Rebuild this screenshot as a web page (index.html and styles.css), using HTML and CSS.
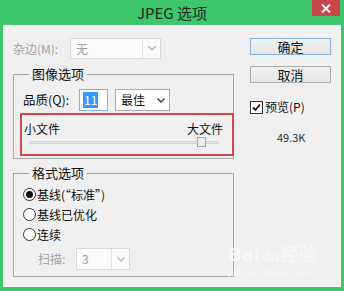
FILE: index.html
```html
<!DOCTYPE html>
<html lang="zh-CN">
<head>
  <meta charset="UTF-8" />
  <title>JPEG 选项</title>
  <link rel="stylesheet" href="styles.css">
</head>
<body>
  <div class="window">
    <!-- Title bar -->
    <div class="titlebar">
      <span></span>
      <span class="title">JPEG 选项</span>
      <span class="close">
        <svg width="10" height="9" viewBox="0 0 10 9"><path d="M1 0.5 L9 8.5 M9 0.5 L1 8.5" stroke="#fff" stroke-width="1.8"/></svg>
      </span>
    </div>

    <div class="client">
      <div class="main">
        <!-- Matte row -->
        <div class="row matte-row">
          <span class="label disabled matte-label">杂边(M):</span>
          <div class="select disabled matte-select">
            <span class="val">无</span>
            <span class="arrow"><svg width="8" height="5" viewBox="0 0 8 5"><path d="M0.5 0.5 L4 4 L7.5 0.5" fill="none" stroke="#b5b5b5" stroke-width="1.4"/></svg></span>
          </div>
        </div>

        <!-- Image options -->
        <div class="group image-group">
          <div class="group-title">图像选项</div>
          <div class="row quality-row">
            <span class="label quality-label">品质(Q):</span>
            <div class="input"><span class="sel">11</span></div>
            <div class="select quality-select">
              <span class="val">最佳</span>
              <span class="arrow plain"><svg width="8" height="5" viewBox="0 0 8 5"><path d="M0.5 0.5 L4 4 L7.5 0.5" fill="none" stroke="#444" stroke-width="1.5"/></svg></span>
            </div>
          </div>
          <div class="highlight">
            <div class="size-labels"><span>小文件</span><span>大文件</span></div>
            <div class="slider">
              <div class="track"></div>
              <div class="thumb"></div>
            </div>
          </div>
        </div>

        <!-- Format options -->
        <div class="group format-group">
          <div class="group-title">格式选项</div>
          <div class="radio-row first"><span class="radio on"></span><span>基线(“标准”)</span></div>
          <div class="radio-row"><span class="radio"></span><span>基线已优化</span></div>
          <div class="radio-row"><span class="radio"></span><span>连续</span></div>
          <div class="row scan-row">
            <span class="label disabled scan-label">扫描:</span>
            <div class="select disabled scan-select">
              <span class="val">3</span>
              <span class="arrow"><svg width="8" height="5" viewBox="0 0 8 5"><path d="M0.5 0.5 L4 4 L7.5 0.5" fill="none" stroke="#b5b5b5" stroke-width="1.4"/></svg></span>
            </div>
          </div>
        </div>
      </div>

      <!-- Buttons and preview -->
      <div class="side">
        <div class="button default">确定</div>
        <div class="button cancel">取消</div>
        <div class="check-row">
          <span class="checkbox"><svg width="11" height="11" viewBox="0 0 11 11"><path d="M2 5.5 L4.5 8 L9 2.5" fill="none" stroke="#111" stroke-width="1.8"/></svg></span>
          <span>预览(P)</span>
        </div>
        <div class="filesize">49.3K</div>
      </div>

      <div class="watermark">Bai<span class="paw">du</span>经验<div class="wm-url">jingyan.baidu.com</div></div>
    </div>
  </div>
</body>
</html>
```

FILE: styles.css
```css
/* Page */
body {
  margin: 0;
  font-family: "Noto Sans CJK SC", "Noto Sans", sans-serif;
  font-size: 12px;
  color: #111;
}

.window {
  width: 344px;
  height: 291px;
  background: #3ec66a;
  display: flex;
  flex-direction: column;
}

/* Title bar */
.titlebar {
  height: 25px;
  display: grid;
  grid-template-columns: 1fr auto 1fr;
  align-items: start;
}

.title {
  font-size: 15px;
  line-height: 25px;
  color: #1d2a22;
}

.close {
  justify-self: end;
  width: 28px;
  height: 16px;
  margin-right: 4px;
  background: #c9474b;
  display: flex;
  align-items: center;
  justify-content: center;
}

/* Client area */
.client {
  position: relative;
  margin: 0 3px;
  height: 262px;
  background: #f0f0f0;
  box-shadow: inset 0 0 0 1px #f7f7f7;
  display: flex;
  padding: 13px 0 0 10px;
  box-sizing: border-box;
}

.main {
  width: 221px;
}

.row {
  display: flex;
  align-items: center;
}

.label {
  line-height: 16px;
}

.disabled {
  color: #a2a2a2;
}

/* Select boxes */
.select {
  display: flex;
  box-sizing: border-box;
  border: 1px solid #acacac;
  background: #fff;
}

.select .val {
  flex: 1;
  padding-left: 5px;
  line-height: 19px;
}

.select .arrow {
  width: 17px;
  border-left: 1px solid #e3e3e3;
  display: flex;
  align-items: center;
  justify-content: center;
}

.select .arrow.plain {
  border-left: none;
}

.select.disabled {
  border-color: #dadada;
  background: #fbfbfb;
}

.matte-row {
  height: 21px;
}

.matte-label {
  width: 57px;
}

.matte-select {
  width: 91px;
  height: 21px;
}

/* Groups */
.group {
  box-sizing: border-box;
  border: 1px solid #a6a6a6;
  padding-left: 9px;
}

.group-title {
  width: fit-content;
  margin: -9px 0 0 6px;
  padding: 0 3px;
  font-size: 13px;
  line-height: 16px;
  background: #f0f0f0;
}

.image-group {
  margin-top: 15px;
  height: 85px;
}

.quality-row {
  margin-top: 7px;
  height: 22px;
}

.quality-label {
  width: 56px;
  font-size: 12.5px;
}

.input {
  width: 29px;
  height: 22px;
  box-sizing: border-box;
  border: 1px solid #7eb4ea;
  background: #fff;
  padding: 2px 0 0 3px;
}

.input .sel {
  display: block;
  width: fit-content;
  background: #3399ff;
  color: #fff;
  line-height: 16px;
  padding: 0 1px;
}

.quality-select {
  margin-left: 7px;
  width: 55px;
  height: 22px;
}

.quality-select .val {
  line-height: 20px;
}

/* Red highlight around slider */
.highlight {
  margin: 2px 0 0 -3px;
  width: 214px;
  height: 43px;
  box-sizing: border-box;
  border: 2px solid #d6474b;
  padding: 6px 9px 0 2px;
}

.size-labels {
  display: flex;
  justify-content: space-between;
  line-height: 16px;
}

.slider {
  position: relative;
  margin-left: 5px;
  width: 190px;
  height: 11px;
}

.track {
  position: relative;
  top: 4px;
  height: 3px;
  box-sizing: border-box;
  border: 1px solid #d6d6d6;
  background: #e7e7e7;
}

.thumb {
  position: absolute;
  left: 168px;
  top: 0;
  width: 9px;
  height: 10px;
  box-sizing: border-box;
  border: 1px solid #a9a9a9;
  background: #ececec;
}

.format-group {
  margin-top: 14px;
  height: 104px;
}

.radio-row {
  display: flex;
  align-items: center;
  height: 20px;
  gap: 1px;
}

.radio-row.first {
  margin-top: 3px;
}

.radio {
  width: 13px;
  height: 13px;
  box-sizing: border-box;
  border: 1px solid #333;
  border-radius: 50%;
  background: #fff;
  display: flex;
  align-items: center;
  justify-content: center;
}

.radio.on::after {
  content: "";
  width: 7px;
  height: 7px;
  border-radius: 50%;
  background: #111;
}

.scan-row {
  margin-top: 4px;
  height: 22px;
}

.scan-label {
  margin-left: 15px;
  width: 38px;
}

.scan-select {
  width: 54px;
  height: 22px;
}

.scan-select .val {
  line-height: 20px;
}

/* Right column */
.side {
  margin-left: 16px;
  width: 81px;
}

.button {
  height: 17px;
  box-sizing: border-box;
  border: 1px solid #acacac;
  background: linear-gradient(#f2f2f2, #e6e6e6);
  text-align: center;
  font-size: 13px;
  line-height: 15px;
}

.button.default {
  border-color: #7fb0de;
}

.button.cancel {
  margin-top: 11px;
}

.check-row {
  margin-top: 16px;
  display: flex;
  align-items: center;
  gap: 2px;
  line-height: 16px;
}

.checkbox {
  width: 13px;
  height: 13px;
  box-sizing: border-box;
  border: 1px solid #333;
  background: #fff;
  display: flex;
  align-items: center;
  justify-content: center;
}

.filesize {
  margin: 15px 0 0 27px;
  font-size: 11px;
  line-height: 14px;
  color: #333;
}

/* Faint watermark */
.watermark {
  position: absolute;
  left: 225px;
  top: 220px;
  color: #f7f7f7;
  font-family: "DejaVu Sans", sans-serif;
  font-weight: bold;
  font-size: 18px;
  line-height: 20px;
}

.watermark .paw {
  font-size: 12px;
  margin: 0 2px;
}

.wm-url {
  font-size: 9px;
  font-weight: normal;
  line-height: 12px;
}
```
